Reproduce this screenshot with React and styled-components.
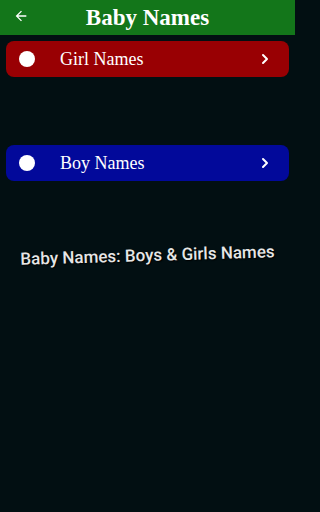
import React from 'react';
import styled, { createGlobalStyle } from 'styled-components';

const GlobalStyle = createGlobalStyle`
  html, body {
    margin: 0;
    padding: 0;
    background: #020f12;
  }
`;

const Page = styled.div`
  width: 295px;
  height: 512px;
  background: #020f12;
  display: flex;
  flex-direction: column;
  overflow: hidden;
`;

const Header = styled.header`
  height: 35px;
  background: #13761a;
  display: flex;
  align-items: center;
  position: relative;
  justify-content: center;
`;

const BackButton = styled.button`
  position: absolute;
  left: 12px;
  top: 7px;
  background: none;
  border: none;
  padding: 0;
  width: 18px;
  height: 18px;
  display: flex;
  align-items: center;
  justify-content: center;
`;

const Title = styled.h1`
  margin: 0;
  font-family: "Liberation Serif", "DejaVu Serif", serif;
  font-weight: bold;
  font-size: 23px;
  color: #fff;
`;

const Content = styled.main`
  display: flex;
  flex-direction: column;
  padding: 6px 6px 0;
`;

const CategoryButton = styled.div`
  height: 36px;
  border-radius: 8px;
  background: ${p => p.bg};
  display: flex;
  align-items: center;
  padding: 0 18px 0 13px;
  margin-bottom: ${p => p.gap || 0}px;
`;

const Dot = styled.span`
  width: 16px;
  height: 16px;
  border-radius: 50%;
  background: #fff;
  flex-shrink: 0;
`;

const Label = styled.span`
  flex: 1;
  margin-left: 25px;
  font-family: "Liberation Serif", "DejaVu Serif", serif;
  font-size: 18px;
  color: #fff;
`;

const Tagline = styled.p`
  margin: 64px 0 0;
  text-align: center;
  font-family: Roboto, "Noto Sans", sans-serif;
  font-weight: 500;
  font-size: 17px;
  color: #e6e6e6;
  text-shadow: 1px 1px 1px #000;
  transform: rotate(-1.7deg);
`;

const Chevron = () => (
  <svg width="12" height="12" viewBox="0 0 24 24" fill="none" stroke="#fff" strokeWidth="4" strokeLinecap="round" strokeLinejoin="round">
    <path d="M8 4l8 8-8 8" />
  </svg>
);

const ArrowLeft = () => (
  <svg width="16" height="16" viewBox="0 0 24 24" fill="#fff">
    <path d="M20 11H7.83l5.59-5.59L12 4l-8 8 8 8 1.41-1.41L7.83 13H20v-2z" />
  </svg>
);

const categories = [
  { label: 'Girl Names', bg: '#990003', gap: 68 },
  { label: 'Boy Names', bg: '#02099a', gap: 0 },
];

export default function App() {
  return (
    <>
      <GlobalStyle />
      <Page>
        <Header>
          <BackButton aria-label="back">
            <ArrowLeft />
          </BackButton>
          <Title>Baby Names</Title>
        </Header>
        <Content>
          {categories.map(c => (
            <CategoryButton key={c.label} bg={c.bg} gap={c.gap}>
              <Dot />
              <Label>{c.label}</Label>
              <Chevron />
            </CategoryButton>
          ))}
          <Tagline>Baby Names: Boys &amp; Girls Names</Tagline>
        </Content>
      </Page>
    </>
  );
}
